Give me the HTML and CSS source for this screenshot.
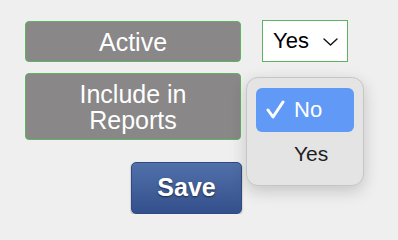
FILE: index.html
```html
<!DOCTYPE html>
<html>
<head>
<meta charset="utf-8">
<link rel="stylesheet" href="styles.css">
</head>
<body>
<form class="form">
  <div class="label">Active</div>
  <div class="select">
    <span class="select-value">Yes</span>
    <svg class="chevron" width="15" height="8" viewBox="0 0 15 8"><polyline points="1,1 7.5,7 14,1" fill="none" stroke="#111" stroke-width="1.4" stroke-linecap="round" stroke-linejoin="round"/></svg>
  </div>
  <div class="label">Include in<br>Reports</div>
  <div class="spacer"></div>
  <button type="button" class="save">Save</button>
  <div class="popup">
    <div class="option selected">
      <svg class="check" width="19" height="19" viewBox="0 0 19 19"><polyline points="2,10 7,17 17,2" fill="none" stroke="#fff" stroke-width="3" stroke-linecap="round" stroke-linejoin="round"/></svg>
      <span>No</span>
    </div>
    <div class="option"><span>Yes</span></div>
  </div>
</form>
</body>
</html>
```
FILE: styles.css
```css
html, body {
  margin: 0;
  background: #efefef;
  font-family: "Liberation Sans", Arial, sans-serif;
}
html {
  height: 224px;
  overflow: hidden;
}
.form {
  position: relative;
  display: grid;
  grid-template-columns: 216px 86px;
  column-gap: 21px;
  row-gap: 11px;
  align-items: start;
  padding: 21px 0 0 25px;
  margin: 0;
}
.label {
  box-sizing: border-box;
  background: #898787;
  border: 1px solid #5fb360;
  border-radius: 4px;
  color: #fff;
  font-size: 25px;
  line-height: 26px;
  padding: 6.5px 8px;
  text-align: center;
}
.select {
  box-sizing: border-box;
  height: 42px;
  margin-top: -1px;
  background: #fff;
  border: 1px solid #5fb360;
  display: flex;
  align-items: center;
  justify-content: space-between;
  padding: 0 9px 0 10px;
}
.select-value {
  font-size: 22px;
  color: #000;
}
.chevron {
  display: block;
  margin-top: 2px;
}
.save {
  grid-column: 1;
  justify-self: end;
  margin-top: 10.5px;
  margin-right: -1px;
  width: 111px;
  height: 52px;
  border: 1px solid #2f4a80;
  border-radius: 5px;
  background: linear-gradient(#5170aa, #34508c);
  box-shadow: 0 1px 2px rgba(0,0,0,0.35);
  color: #fff;
  font-family: "Liberation Sans", Arial, sans-serif;
  font-weight: bold;
  font-size: 25px;
  text-shadow: 0 1px 2px rgba(0,0,0,0.55);
  padding: 0;
}
.popup {
  position: absolute;
  left: 246px;
  top: 77px;
  box-sizing: border-box;
  width: 118px;
  height: 109px;
  padding: 10px 9px;
  background: #e4e4e4;
  border: 1px solid #c6c6c6;
  border-radius: 12px;
  box-shadow: 0 5px 16px rgba(0,0,0,0.18);
}
.option {
  position: relative;
  height: 44px;
  display: flex;
  align-items: center;
  padding-left: 38px;
  font-size: 21px;
  color: #1e1e1e;
  border-radius: 6px;
}
.option.selected {
  background: #6199f6;
  color: #fff;
  font-size: 22px;
}
.check {
  position: absolute;
  left: 10px;
  top: 12px;
}
```
